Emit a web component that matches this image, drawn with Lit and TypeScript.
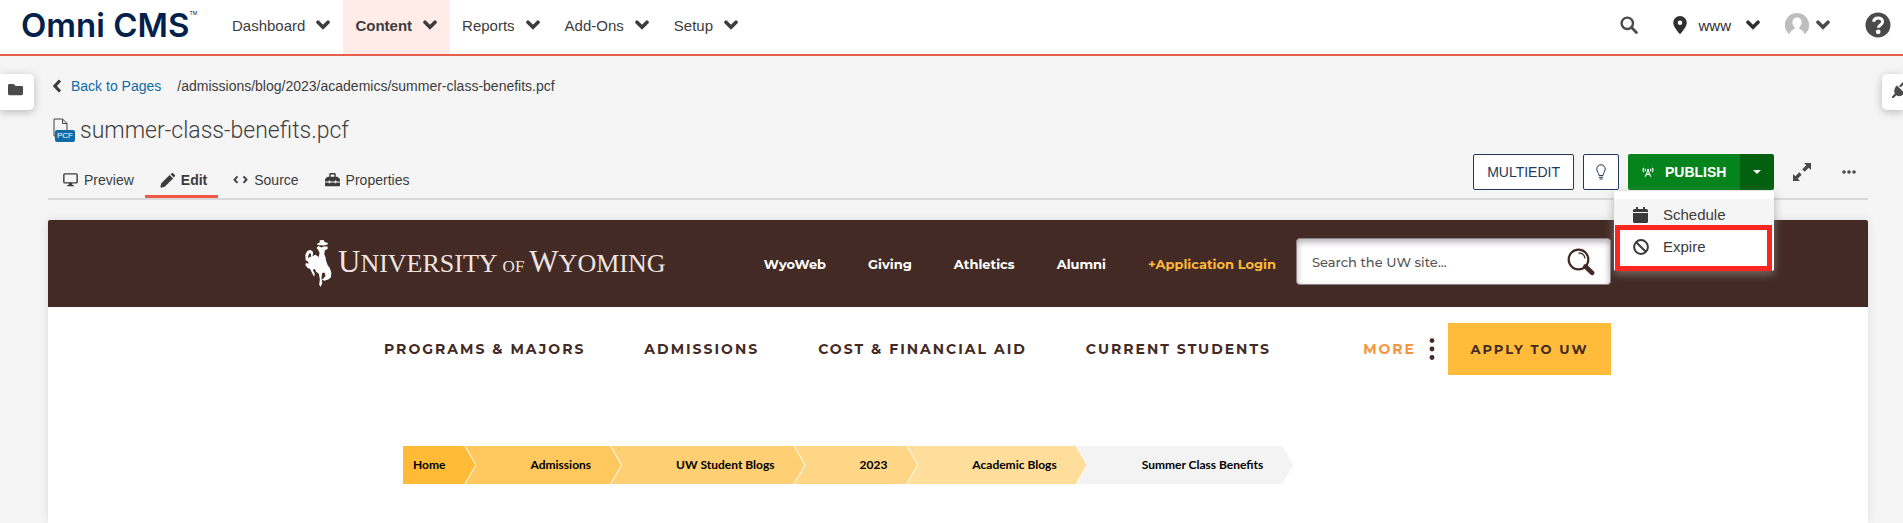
import { LitElement, html, css, svg } from "lit";
import { customElement, property } from "lit/decorators.js";
import { classMap } from "lit/directives/class-map.js";

const glyphs: Record<string, { box: string; body: unknown }> = {
  down: { box: "0 0 14 10", body: svg`<path d="M2 2.2 7 7.2 12 2.2" fill="none" stroke="currentColor" stroke-width="3.6" stroke-linecap="round" stroke-linejoin="miter"/>` },
  back: { box: "0 0 10 14", body: svg`<path d="M8 1.500 2.900 7 8 12.500" fill="none" stroke="currentColor" stroke-width="3.200"/>` },
  search: { box: "0 0 18 18", body: svg`<circle cx="7.3" cy="7.3" r="5.7" fill="none" stroke="currentColor" stroke-width="2.4"/><path d="M11.6 11.6 16.4 16.4" stroke="currentColor" stroke-width="2.8" stroke-linecap="round"/>` },
  pin: { box: "0 0 14 18", body: svg`<path fill="currentColor" fill-rule="evenodd" d="M7 0a6.8 6.8 0 0 1 6.8 6.8c0 3.4-4 8-6.1 10.8a.9.9 0 0 1-1.4 0C4.200 14.800.2 10.200.2 6.800A6.800 6.800 0 0 1 7 0Zm0 4.400a2.300 2.300 0 1 0 0 4.600 2.300 2.300 0 0 0 0-4.600Z"/>` },
  avatar: { box: "0 0 24 24", body: svg`<path fill="#bdbdbd" fill-rule="evenodd" d="M12 0a12 12 0 0 1 9 20l-1.300 1.500c-.6-2.600-2.300-4.300-4.700-5.200a1.300 1.300 0 0 1-.4-2c1.300-1.300 2-3.200 2-5.200 0-2.900-2-4.700-4.600-4.700S7.400 6.200 7.400 9.100c0 2 .7 3.900 2 5.200a1.300 1.300 0 0 1-.4 2c-2.400.9-4.100 2.600-4.700 5.200L3 20A12 12 0 0 1 12 0Z"/>` },
  help: { box: "0 0 26 26", body: svg`<circle cx="13" cy="13" r="12.500" fill="currentColor"/><path d="M8.500 9.800C9 7.200 10.700 6 13 6c2.600 0 4.600 1.500 4.600 3.800 0 3.200-4.200 3-4.200 6" fill="none" stroke="#fff" stroke-width="3"/><circle cx="13.200" cy="19.800" r="2.400" fill="#fff"/>` },
  folder: { box: "0 0 16 12", body: svg`<path fill="currentColor" d="M1.500 0h4.600l2 2h6.400A1.500 1.500 0 0 1 16 3.500v7a1.500 1.500 0 0 1-1.500 1.500h-13A1.500 1.500 0 0 1 0 10.500v-9A1.500 1.500 0 0 1 1.500 0Z"/>` },
  plug: { box: "0 0 16 16", body: svg`<path d="M1 15 4 12M8.500 4 11.500 1M12 7.500 15 4.500" stroke="currentColor" stroke-width="2.200" stroke-linecap="round"/><path d="M5 3.500 12.500 11c-2 3.500-6.500 4.300-9 1.500S2.500 5.500 5 3.500Z" fill="currentColor"/>` },
  monitor: { box: "0 0 16 14", body: svg`<rect x=".9" y=".9" width="14.200" height="9.600" rx="1" fill="none" stroke="currentColor" stroke-width="1.500"/><path d="M6.500 10.500h3l.5 2.200h1.500V14h-7v-1.300H6Z" fill="currentColor"/>` },
  pencil: { box: "0 0 16 16", body: svg`<path fill="currentColor" d="M10.200 2 14 5.800 5 14.600 1 15.600.4 15 1.400 11ZM11.200 1.200 12.200.4a1.500 1.500 0 0 1 2 0l1.400 1.400a1.500 1.500 0 0 1 0 2l-.8 1Z"/>` },
  code: { box: "0 0 16 10", body: svg`<path d="M4.800 1.500 1.600 5 4.800 8.500M11.200 1.500 14.400 5 11.200 8.500" fill="none" stroke="currentColor" stroke-width="2"/>` },
  toolbox: { box: "0 0 16 14", body: svg`<path fill="currentColor" fill-rule="evenodd" d="M4.500 4V1.500C4.500.6 5.100 0 6 0h4c.9 0 1.500.6 1.500 1.500V4h1.700L16 6.500V9h-4V8h-1.500v1h-5V8H4v1H0V6.500L2.800 4ZM6 4h4V1.500H6ZM0 10h4v1h1.500v-1h5v1H12v-1h4v3a1 1 0 0 1-1 1H1a1 1 0 0 1-1-1Z"/>` },
  bulb: { box: "0 0 10 16", body: svg`<path d="M3 11.500C3 9 .8 8 .8 5a4.200 4.200 0 0 1 8.400 0c0 3-2.200 4-2.200 6.500ZM3 13.300h4M3.500 15h3" fill="none" stroke="currentColor" stroke-width="1"/>` },
  tower: { box: "0 0 14 12", body: svg`<path d="M3.700 11.500 7 3.500l3.300 8M4.800 8.600h4.400M2 1a4.500 4.500 0 0 0 0 5M12 1a4.500 4.500 0 0 1 0 5M4.200 2a2.600 2.600 0 0 0 0 3M9.800 2a2.600 2.600 0 0 1 0 3" fill="none" stroke="currentColor" stroke-width="1.300"/><circle cx="7" cy="3.500" r="1.200" fill="currentColor"/>` },
  caret: { box: "0 0 8 4", body: svg`<path d="M0 0h8L4 4Z" fill="currentColor"/>` },
  expand: { box: "0 0 18 18", body: svg`<path fill="currentColor" d="M11 0h7v7l-2.300-2.300-4 4-2.400-2.400 4-4ZM7 18H0v-7l2.300 2.300 4-4 2.400 2.400-4 4Z"/>` },
  dots: { box: "0 0 14 4", body: svg`<circle cx="2" cy="2" r="1.800" fill="currentColor"/><circle cx="7" cy="2" r="1.800" fill="currentColor"/><circle cx="12" cy="2" r="1.800" fill="currentColor"/>` },
  calendar: { box: "0 0 15 16", body: svg`<path fill="currentColor" d="M3 0h2v2h5V0h2v2h1.500A1.500 1.500 0 0 1 15 3.500V5H0V3.500A1.500 1.500 0 0 1 1.500 2H3ZM0 6h15v8.500a1.500 1.500 0 0 1-1.500 1.500h-12A1.500 1.500 0 0 1 0 14.500Z"/>` },
  ban: { box: "0 0 16 16", body: svg`<circle cx="8" cy="8" r="6.900" fill="none" stroke="currentColor" stroke-width="2"/><path d="M3.200 3.200 12.800 12.800" stroke="currentColor" stroke-width="2"/>` },
  file: { box: "0 0 15 19", body: svg`<path d="M4 18H1V1h8.500L14 5.500V12M9.500 1v4.500H14" fill="none" stroke="currentColor" stroke-width="1"/>` },
  lens: { box: "0 0 28 28", body: svg`<circle cx="11.500" cy="11.500" r="9.800" fill="none" stroke="currentColor" stroke-width="2.200"/><path d="M11.500 4.800c3.400 0 6 2.300 6.600 5.700" fill="none" stroke="currentColor" stroke-width="1.200"/><path d="M18.500 18.500l6.600 6.300" stroke="currentColor" stroke-width="4.600" stroke-linecap="round"/>` },
  more: { box: "0 0 6 22", body: svg`<circle cx="3" cy="2.600" r="2.400" fill="currentColor"/><circle cx="3" cy="11" r="2.400" fill="currentColor"/><circle cx="3" cy="19.500" r="2.400" fill="currentColor"/>` },
  horse: { box: "27 18 80 140", body: svg`<path fill="#fff" d="M63 28 70 26 71 19 82 18 85 24 95 27 93 32 82 34 64 33ZM67 36 76 40 82 37 94 37 94 45 86 48 84 60 88 70 89 78 94 92 100 100 105 114 104 128 96 135 84 139 77 136 84 130 88 122 84 114 78 116 76 130 78 146 73 157 69 150 71 134 68 118 60 112 56 104 50 106 56 118 54 127 48 116 42 104 34 100 28 92 30 86 38 88 34 78 38 70 48 66 58 62 68 68 70 56 66 47 61 42ZM36 82 29 78 28 62 33 51 42 47 50 52 51 62 46 68 44 58 39 58 36 68Z"/>` },
};

const glyph = (name: string, size: string) =>
  html`<svg class="glyph ${size}" viewBox=${glyphs[name].box} aria-hidden="true">${glyphs[name].body}</svg>`;

const shared = css`
  * { box-sizing: border-box; }
  .glyph { display: block; flex: none; }
  a { color: inherit; text-decoration: none; }
  button { font: inherit; color: inherit; background: none; border: 0; padding: 0; margin: 0; cursor: pointer; }
  ul, ol { list-style: none; margin: 0; padding: 0; }
  .w6 { width: 6px; } .w8 { width: 8px; } .w10 { width: 10px; } .w12 { width: 12px; } .w14 { width: 14px; } .w15 { width: 15px; }
  .w16 { width: 16px; } .w18 { width: 18px; } .w24 { width: 24px; } .w26 { width: 26px; } .w27 { width: 27px; } .w28 { width: 28px; }
`;

@customElement("cms-header")
class CmsHeader extends LitElement {
  static styles = [shared, css`
    :host { display: block; }
    .bar { display: flex; align-items: stretch; height: 56px; background: #fff; border-bottom: 2px solid #e65f4b; color: #3c3c3c; font-size: 15px; }
    .logo { display: flex; align-items: center; width: 220px; padding: 0 0 4px 21px; font: 600 33px/40px Inter, sans-serif; color: #03214a; white-space: nowrap; }
    .tm { align-self: flex-start; font: 5px/10px Inter, sans-serif; padding-top: 8px; }
    .menus { display: flex; }
    .menus li { display: flex; }
    .menu { display: flex; align-items: center; gap: 11px; padding: 0 13px 4px 12px; height: 54px; }
    .current { background: #ffebe8; font-weight: bold; }
    .tools { display: flex; align-items: center; margin-left: auto; padding: 0 12px 4px 0; gap: 35px; color: #4a4a4a; }
    .group { display: flex; align-items: center; gap: 25px; }
    .site { display: flex; align-items: center; gap: 12px; color: #2f2f2f; }
    .name { display: flex; align-items: center; gap: 15px; }
    .user { display: flex; align-items: center; gap: 7px; }
  `];
  render() {
    const menus = ["Dashboard", "Content", "Reports", "Add-Ons", "Setup"];
    return html`<header class="bar">
      <a class="logo" href="#">Omni CMS<span class="tm">TM</span></a>
      <nav><ul class="menus">${menus.map((m) => html`<li>
        <button class=${classMap({ menu: true, current: m === "Content" })}>${m}${glyph("down", "w14")}</button></li>`)}</ul></nav>
      <div class="tools">
        <button aria-label="Search">${glyph("search", "w18")}</button>
        <div class="group">
          <button class="site">${glyph("pin", "w14")}<span class="name">www${glyph("down", "w14")}</span></button>
          <button class="user" aria-label="Account">${glyph("avatar", "w24")}${glyph("down", "w14")}</button>
        </div>
        <button aria-label="Help">${glyph("help", "w26")}</button>
      </div>
    </header>`;
  }
}

@customElement("publish-menu")
class PublishMenu extends LitElement {
  static styles = [shared, css`
    :host { display: block; position: relative; }
    .split { display: flex; height: 36px; border-radius: 2px; overflow: hidden; color: #fff; }
    .publish { display: flex; align-items: center; gap: 11px; width: 112px; padding-left: 14px; background: #05831c; font-weight: bold; }
    .toggle { display: grid; place-items: center; width: 34px; background: #03600f; }
    .menu { position: absolute; z-index: 5; top: 37px; right: 0; width: 160px; padding: 8px 0; background: #fff; border-radius: 2px; box-shadow: 0 3px 10px rgba(150, 140, 140, 0.7); font-size: 15px; color: #3a3a3a; }
    .item { display: grid; grid-template-columns: 16px 1fr; align-items: center; gap: 14px; width: 100%; height: 32px; padding: 0 19px 1px; text-align: left; }
    .hover { background: #f5f5f5; }
    .mark { position: absolute; inset: 34px 2px 0 1px; border: 5px solid #fb2620; pointer-events: none; }
  `];
  render() {
    return html`<div class="split">
        <button class="publish">${glyph("tower", "w12")}PUBLISH</button>
        <button class="toggle" aria-label="More publish options">${glyph("caret", "w8")}</button>
      </div>
      <div class="menu">
        <button class="item hover">${glyph("calendar", "w15")}Schedule</button>
        <button class="item">${glyph("ban", "w16")}Expire</button>
        <div class="mark"></div>
      </div>`;
  }
}

@customElement("page-toolbar")
class PageToolbar extends LitElement {
  static styles = [shared, css`
    :host { display: block; font-size: 14px; color: #3c3c3c; }
    .trail { display: flex; align-items: center; gap: 16px; height: 28px; padding-left: 4px; }
    .back { display: flex; align-items: center; gap: 9px; }
    .link { color: #0d6ca8; }
    .row { display: flex; justify-content: space-between; align-items: flex-end; border-bottom: 2px solid #d9d9d9; }
    .title { display: flex; align-items: center; gap: 5px; height: 65px; margin: 0; padding: 0 0 4px 5px; font: 300 23px/32px Roboto, sans-serif; color: #404040; }
    .icon { position: relative; width: 22px; height: 25px; }
    .kind { position: absolute; left: 2px; bottom: 1px; width: 20px; background: #0d6ca8; color: #fff; border-radius: 2px; font: 8px/12px "Liberation Sans", Arial, sans-serif; text-align: center; }
    .tabs { display: flex; height: 33px; }
    .tab { display: flex; align-items: center; gap: 6px; height: 33px; padding: 0 11px 0 15px; border-bottom: 3px solid transparent; }
    .active { font-weight: bold; border-color: #ee5a45; }
    .actions { display: flex; gap: 9px; margin-bottom: 8px; }
    .outline { display: grid; place-items: center; height: 36px; min-width: 36px; background: #fff; border: 1px solid #23395b; border-radius: 2px; color: #23395b; }
    .wide { padding: 0 13px; }
    .plain { display: grid; place-items: center; width: 38px; height: 36px; color: #4a4a4a; }
  `];
  render() {
    const tabs = [["Preview", "monitor"], ["Edit", "pencil"], ["Source", "code"], ["Properties", "toolbox"]];
    return html`
      <div class="trail">
        <a class="back" href="#">${glyph("back", "w10")}<span class="link">Back to Pages</span></a>
        <span>/admissions/blog/2023/academics/summer-class-benefits.pcf</span>
      </div>
      <div class="row">
        <div>
          <h1 class="title"><span class="icon">${glyph("file", "w15")}<span class="kind">PCF</span></span>summer-class-benefits.pcf</h1>
          <nav class="tabs">${tabs.map(([label, icon]) => html`
            <a href="#" class=${classMap({ tab: true, active: label === "Edit" })}>${glyph(icon, "w15")}${label}</a>`)}</nav>
        </div>
        <div class="actions">
          <button class="outline wide">MULTIEDIT</button>
          <button class="outline" aria-label="Page check">${glyph("bulb", "w10")}</button>
          <publish-menu></publish-menu>
          <button class="plain" aria-label="Full screen">${glyph("expand", "w18")}</button>
          <button class="plain" aria-label="More">${glyph("dots", "w14")}</button>
        </div>
      </div>`;
  }
}

@customElement("crumb-arrows")
class CrumbArrows extends LitElement {
  @property({ attribute: false }) items: string[] = [];
  static styles = [shared, css`
    :host { display: block; }
    .list { display: flex; font: 700 12px/38px Lato, "Open Sans", sans-serif; color: #000; }
    .step, .label { clip-path: polygon(0 0, calc(100% - 11px) 0, 100% 50%, calc(100% - 11px) 100%, 0 100%); }
    .step { margin-left: -12px; padding-right: 1px; background: #fff; white-space: nowrap; }
    .label { display: block; padding: 0 30px 0 66px; }
    .step:nth-child(1) { z-index: 6; margin-left: 0; }
    .step:nth-child(2) { z-index: 5; }
    .step:nth-child(3) { z-index: 4; }
    .step:nth-child(4) { z-index: 3; }
    .step:nth-child(5) { z-index: 2; }
    .step:nth-child(1) .label { background: #ffbb36; padding-left: 10px; }
    .step:nth-child(2) .label { background: #ffc85f; }
    .step:nth-child(3) .label { background: #ffcf73; }
    .step:nth-child(4) .label { background: #ffd686; }
    .step:nth-child(5) .label { background: #ffdd9b; }
    .step:nth-child(6) .label { background: #f3f3f3; }
  `];
  render() {
    return html`<nav aria-label="Breadcrumb"><ol class="list">${this.items.map((t) => html`<li class="step"><a class="label" href="#">${t}</a></li>`)}</ol></nav>`;
  }
}

@customElement("site-preview")
class SitePreview extends LitElement {
  static styles = [shared, css`
    :host { display: block; flex: 1; background: #fff; border-radius: 2px 2px 0 0; overflow: hidden; box-shadow: 0 0 8px rgba(40, 50, 90, 0.12); color: #432a24; font-family: Montserrat, Inter, sans-serif; }
    .band { height: 87px; background: #432a24; color: #fff; }
    .inner { display: flex; align-items: center; width: 1306px; max-width: 100%; height: 100%; margin: 0 auto; }
    .brand { display: flex; align-items: center; gap: 6px; white-space: nowrap; }
    .words { font: 26px/40px "Liberation Serif", serif; color: #eee4e0; padding-top: 2px; }
    .cap { font-size: 31px; }
    .of { font-size: 17px; margin: 0 5px; }
    .links { display: flex; gap: 42px; margin: 0 20px 0 auto; font-size: 13px; font-weight: 700; white-space: nowrap; }
    .gold { color: #fdb83a; }
    .search { display: flex; align-items: center; width: 315px; height: 47px; margin-bottom: 4px; padding: 0 15px; background: #fff; border: 1px solid #8e8488; border-radius: 4px; box-shadow: inset 0 3px 6px rgba(60, 50, 70, 0.4); color: #432a24; }
    .field { flex: 1; min-width: 0; border: 0; outline: 0; background: none; padding: 0; font: 500 13px/20px Montserrat, Inter, sans-serif; color: #555; }
    .field::placeholder { color: #555; opacity: 1; }
    .main { display: flex; align-items: center; width: 1306px; max-width: 100%; margin: 16px auto 0; padding-left: 79px; font-size: 14px; font-weight: 700; letter-spacing: 2px; white-space: nowrap; }
    .sections { display: flex; gap: 59px; }
    .more { display: flex; align-items: center; gap: 13px; margin-left: auto; font: inherit; letter-spacing: inherit; }
    .orange { color: #f7953a; }
    .apply { display: grid; place-items: center; width: 163px; height: 52px; margin-left: 13px; background: #ffbb39; font-size: 13px; }
    .crumbs { width: 1110px; max-width: 100%; margin: 71px auto 0; }
  `];
  render() {
    return html`
      <div class="band"><div class="inner">
        <a class="brand" href="#">${glyph("horse", "w27")}<span class="words"><span class="cap">U</span>NIVERSITY<span class="of">OF</span><span class="cap">W</span>YOMING</span></a>
        <nav class="links">
          ${["WyoWeb", "Giving", "Athletics", "Alumni"].map((t) => html`<a href="#">${t}</a>`)}
          <a class="gold" href="#">+Application Login</a>
        </nav>
        <form class="search">
          <input class="field" type="search" aria-label="Search the UW site" placeholder="Search the UW site...">
          <button type="button" aria-label="Search">${glyph("lens", "w28")}</button>
        </form>
      </div></div>
      <div class="main">
        <nav class="sections">${["PROGRAMS & MAJORS", "ADMISSIONS", "COST & FINANCIAL AID", "CURRENT STUDENTS"].map((t) => html`<a href="#">${t}</a>`)}</nav>
        <button class="more"><span class="orange">MORE</span>${glyph("more", "w6")}</button>
        <a class="apply" href="#">APPLY TO UW</a>
      </div>
      <crumb-arrows class="crumbs" .items=${["Home", "Admissions", "UW Student Blogs", "2023", "Academic Blogs", "Summer Class Benefits"]}></crumb-arrows>`;
  }
}

@customElement("app-root")
class AppRoot extends LitElement {
  static styles = [shared, css`
    :host { display: flex; flex-direction: column; position: relative; min-height: 100vh; background: #f5f5f5; overflow: hidden; font-family: "Helvetica Neue", "Liberation Sans", Arial, sans-serif; }
    .work { display: flex; flex: 1; flex-direction: column; gap: 20px; padding: 16px 35px 0 48px; }
    .tools { position: relative; z-index: 2; }
    .drawer { position: absolute; top: 74px; display: flex; align-items: center; height: 36px; background: #fff; color: #4a4a4a; box-shadow: 0 2px 8px rgba(0, 0, 0, 0.25); }
    .left { left: 0; width: 34px; padding: 0 0 4px 8px; border-radius: 0 5px 5px 0; }
    .right { right: 0; width: 21px; padding: 0 0 4px 10px; border-radius: 5px 0 0 5px; overflow: hidden; }
  `];
  render() {
    return html`
      <cms-header></cms-header>
      <main class="work">
        <page-toolbar class="tools"></page-toolbar>
        <site-preview></site-preview>
      </main>
      <button class="drawer left" aria-label="Files">${glyph("folder", "w15")}</button>
      <button class="drawer right" aria-label="Gadgets">${glyph("plug", "w16")}</button>`;
  }
}
